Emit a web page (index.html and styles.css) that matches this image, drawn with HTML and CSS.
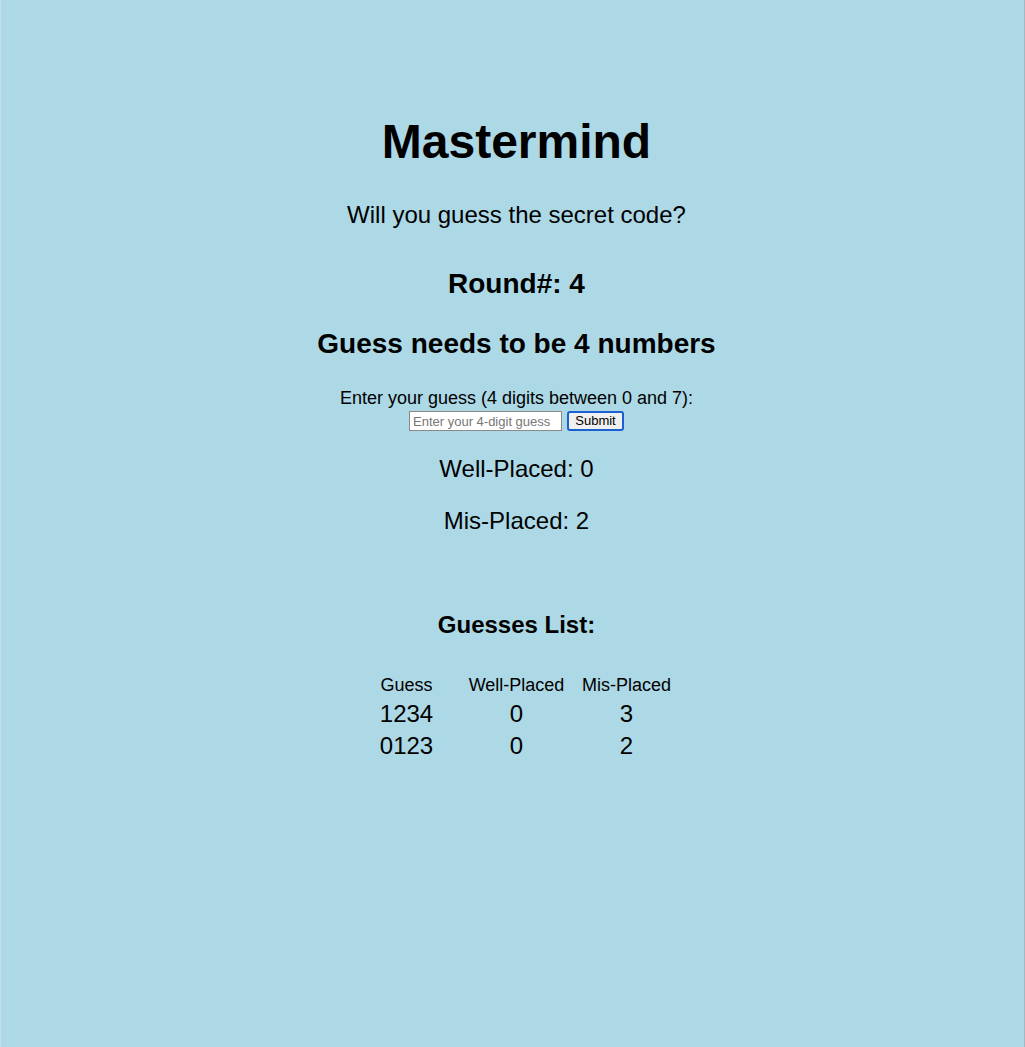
FILE: index.html
```html
<!DOCTYPE html>
<html lang="en">
<head>
<meta charset="utf-8">
<title>Mastermind</title>
<link rel="stylesheet" href="styles.css">
</head>
<body>
<div class="page">
  <h1 class="title">Mastermind</h1>
  <p class="subtitle">Will you guess the secret code?</p>
  <h2 class="round">Round#: 4</h2>
  <h2 class="message">Guess needs to be 4 numbers</h2>
  <form class="guess-form">
    <label class="guess-label" for="guess">Enter your guess (4 digits between 0 and 7):</label>
    <div class="guess-row">
      <input class="guess-input" id="guess" type="text" placeholder="Enter your 4-digit guess">
      <button class="guess-submit" type="button">Submit</button>
    </div>
  </form>
  <p class="result result-well">Well-Placed: 0</p>
  <p class="result result-mis">Mis-Placed: 2</p>
  <h3 class="list-title">Guesses List:</h3>
  <div class="guess-table">
    <div class="th">Guess</div>
    <div class="th">Well-Placed</div>
    <div class="th">Mis-Placed</div>
    <div class="td">1234</div>
    <div class="td">0</div>
    <div class="td">3</div>
    <div class="td">0123</div>
    <div class="td">0</div>
    <div class="td">2</div>
  </div>
</div>
</body>
</html>
```

FILE: styles.css
```css
html, body {
  margin: 0;
  padding: 0;
}

body {
  background: #add8e6;
  font-family: "Liberation Sans", Arial, Helvetica, sans-serif;
  color: #000;
}

.page {
  box-sizing: border-box;
  min-height: 100vh;
  padding: 114px 0 0 8px;
  border-left: 1px solid #c4e0e9;
  border-right: 1px solid #a3b9c0;
  display: flex;
  flex-direction: column;
  align-items: center;
  text-align: center;
}

.title {
  margin: 0;
  font-size: 48px;
  line-height: 56px;
  font-weight: bold;
}

.subtitle {
  margin: 31px 0 0;
  font-size: 24px;
  line-height: 28px;
}

.round {
  margin: 39px 0 0;
  font-size: 28px;
  line-height: 32px;
  font-weight: bold;
}

.message {
  margin: 28px 0 0;
  font-size: 28px;
  line-height: 32px;
  font-weight: bold;
}

.guess-form {
  margin: 28px 0 0;
  display: flex;
  flex-direction: column;
  align-items: center;
}

.guess-label {
  font-size: 18px;
  line-height: 21px;
}

.guess-row {
  margin-top: 2px;
  display: flex;
  align-items: center;
  gap: 5px;
}

.guess-input {
  box-sizing: border-box;
  width: 153px;
  height: 20px;
  margin: 0;
  padding: 0 3px;
  border: 1px solid #8a8a8a;
  background: #fff;
  font-family: "Liberation Sans", Arial, sans-serif;
  font-size: 13px;
}

.guess-input::placeholder {
  color: #777;
}

.guess-submit {
  box-sizing: border-box;
  width: 57px;
  height: 20px;
  margin: 0;
  padding: 0;
  border: 2px solid #1c5fd2;
  border-radius: 3px;
  background: #f0f0f0;
  color: #000;
  font-family: "Liberation Sans", Arial, sans-serif;
  font-size: 13px;
  line-height: 16px;
}

.result {
  margin: 24px 0 0;
  font-size: 24px;
  line-height: 28px;
}

.result-mis {
  margin-top: 24px;
}

.list-title {
  margin: 76px 0 0;
  font-size: 24px;
  line-height: 28px;
  font-weight: bold;
}

.guess-table {
  margin-top: 36px;
  display: grid;
  grid-template-columns: repeat(3, 110px);
  column-gap: 0;
}

.th {
  font-size: 18px;
  line-height: 21px;
  margin-bottom: 4px;
}

.td {
  font-size: 24px;
  line-height: 28px;
  margin-bottom: 4px;
}
```
